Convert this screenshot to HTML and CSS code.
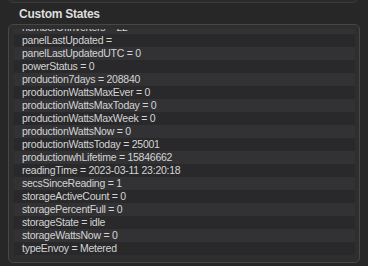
FILE: index.html
```html
<!DOCTYPE html>
<html>
<head>
<meta charset="utf-8">
<link rel="stylesheet" href="styles.css">
</head>
<body>
<div class="prev-box"></div>
<div class="title">Custom States</div>
<div class="group">
  <div class="scroll">
    <ul class="list">
      <li class="row light">numberOfInverters = 22</li>
      <li class="row dark">panelLastUpdated =</li>
      <li class="row light">panelLastUpdatedUTC = 0</li>
      <li class="row dark">powerStatus = 0</li>
      <li class="row light">production7days = 208840</li>
      <li class="row dark">productionWattsMaxEver = 0</li>
      <li class="row light">productionWattsMaxToday = 0</li>
      <li class="row dark">productionWattsMaxWeek = 0</li>
      <li class="row light">productionWattsNow = 0</li>
      <li class="row dark">productionWattsToday = 25001</li>
      <li class="row light">productionwhLifetime = 15846662</li>
      <li class="row dark">readingTime = 2023-03-11 23:20:18</li>
      <li class="row light">secsSinceReading = 1</li>
      <li class="row dark">storageActiveCount = 0</li>
      <li class="row light">storagePercentFull = 0</li>
      <li class="row dark">storageState = idle</li>
      <li class="row light">storageWattsNow = 0</li>
      <li class="row dark">typeEnvoy = Metered</li>
    </ul>
  </div>
</div>
</body>
</html>
```
FILE: styles.css
```css
html, body {
  margin: 0;
  padding: 0;
}
body {
  background: #272727;
  width: 368px;
  height: 266px;
  overflow: hidden;
  padding: 0 8px;
  box-sizing: border-box;
  font-family: "Liberation Sans", Arial, sans-serif;
}
.prev-box {
  height: 12px;
  margin-top: -11px;
  border: 1px solid #3c3c3c;
  border-radius: 5px;
  margin-right: 2px;
  background: #2b2b2b;
}
.title {
  margin-top: 4px;
  padding-left: 11px;
  height: 15px;
  line-height: 15px;
  font-size: 12px;
  font-weight: bold;
  letter-spacing: -0.25px;
  color: #dedede;
}
.group {
  margin-top: 2px;
  height: 239px;
  box-sizing: border-box;
  border: 1px solid #474747;
  border-radius: 5px;
  background: #2e2e2e;
  padding: 4px 4px 6px 5px;
}
.scroll {
  height: 226px;
  overflow: hidden;
}
.list {
  list-style: none;
  margin: -8px 0 0 0;
  padding: 0;
}
.row {
  height: 13px;
  line-height: 13px;
  padding-left: 8px;
  font-size: 10.5px;
  letter-spacing: -0.25px;
  color: #d4d4d4;
  white-space: nowrap;
}
.row.dark {
  background: #29292b;
}
.row.light {
  background: #323234;
}
```
